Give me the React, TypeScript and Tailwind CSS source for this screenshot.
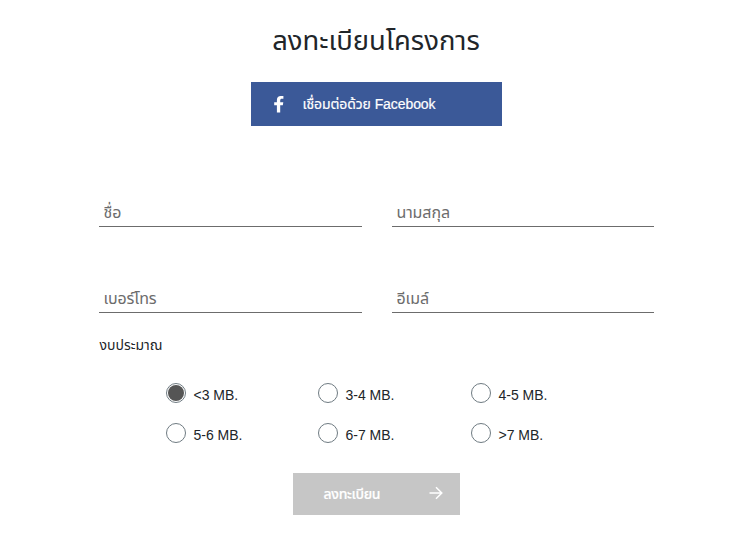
const budgets = [
  { id: 'lt3', label: '<3 MB.' },
  { id: '3-4', label: '3-4 MB.' },
  { id: '4-5', label: '4-5 MB.' },
  { id: '5-6', label: '5-6 MB.' },
  { id: '6-7', label: '6-7 MB.' },
  { id: 'gt7', label: '>7 MB.' },
];

const fields = [
  { name: 'firstName', placeholder: 'ชื่อ' },
  { name: 'lastName', placeholder: 'นามสกุล' },
  { name: 'phone', placeholder: 'เบอร์โทร' },
  { name: 'email', placeholder: 'อีเมล์' },
];

function FacebookIcon() {
  return (
    <svg viewBox="0 0 12 18" className="h-[18px] w-3" fill="#ffffff">
      <path d="M3.9 17.4V10.2H1.2V7.2h2.7V5C3.9 2.4 5.4.9 7.8.9c1.2 0 2.6.2 2.6.2v2.6H9c-1.3 0-1.8.7-1.8 1.6v1.9h3.1l-.5 3H7.2v7.2z" />
    </svg>
  );
}

function ArrowIcon() {
  return (
    <svg viewBox="0 0 14 14" className="mb-0.5 size-3.5" fill="none" stroke="#ffffff" strokeWidth="1.5">
      <path d="M.5 7h12M7 1.2 12.8 7 7 12.8" />
    </svg>
  );
}

export default function App() {
  return (
    <div className="flex h-[537px] flex-col items-center bg-white pr-px pl-0.5 font-['Liberation_Sans','Noto_Sans_Thai',sans-serif] text-[#212529]">
      <h1 className="mt-5 h-[62px] text-[27.4px] leading-[42px] whitespace-nowrap">ลงทะเบียนโครงการ</h1>

      <button className="flex h-11 w-[251px] items-center bg-[#3b5998] pl-[22px] text-sm text-white">
        <FacebookIcon />
        <span className="ml-[18px] tracking-[-0.08px] whitespace-nowrap [-webkit-text-stroke:0.2px_white]">
          เชื่อมต่อด้วย Facebook
        </span>
      </button>

      <form className="mt-[66px] flex w-[555px] flex-col">
        <div className="grid grid-cols-[263px_262px] gap-x-[30px] gap-y-[51px]">
          {fields.map((field) => (
            <input
              key={field.name}
              name={field.name}
              placeholder={field.placeholder}
              className="h-[35px] w-full border-b border-[#6c6c6c] px-[5px] pt-2 text-base tracking-[-0.1px] outline-none placeholder:text-[#6c6c6c]"
            />
          ))}
        </div>

        <p className="mt-5 h-[25px] pl-px text-sm leading-6">งบประมาณ</p>

        <div className="mt-[25px] grid grid-cols-[152px_153px_152px] gap-y-5 pl-[67px]">
          {budgets.map((budget) => (
            <label key={budget.id} className="flex h-5 items-center text-sm">
              <input type="radio" name="budget" defaultChecked={budget.id === 'lt3'} className="peer sr-only" />
              <span className="size-5 shrink-0 rounded-full border border-[#6f7b82] bg-clip-content p-px peer-checked:bg-[#555555]" />
              <span className="mt-1 ml-2 whitespace-nowrap">{budget.label}</span>
            </label>
          ))}
        </div>

        <button className="mt-[30px] flex h-[42px] w-[167px] items-center justify-between self-center bg-[#c6c6c6] pr-[17px] pl-[31px] text-sm font-medium text-white">
          <span className="tracking-[-0.3px] whitespace-nowrap [-webkit-text-stroke:0.2px_white]">ลงทะเบียน</span>
          <ArrowIcon />
        </button>
      </form>
    </div>
  );
}
